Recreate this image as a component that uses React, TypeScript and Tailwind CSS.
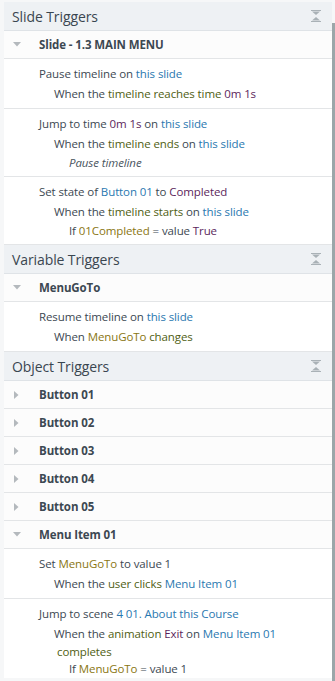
import React from 'react';

const C = {
  gray: 'text-[#3c4852]',
  blue: 'text-[#2a78b0]',
  olive: 'text-[#4f5e12]',
  gold: 'text-[#8a7612]',
  purple: 'text-[#5c1f5c]',
};

type Seg = [string, string];

function Line({ segs, indent = 0, italic = false, h = 'h-[20px] leading-[20px]' }: { segs: Seg[]; indent?: number; italic?: boolean; h?: string }) {
  const pad = indent === 0 ? 'pl-[35px]' : indent === 1 ? 'pl-[50px]' : 'pl-[65px]';
  return (
    <div className={`${pad} ${italic ? 'italic' : ''} ${h} whitespace-nowrap`}>
      {segs.map(([cls, t], i) => (
        <span key={i} className={cls}>{t}</span>
      ))}
    </div>
  );
}

function Collapse() {
  return (
    <svg width="10" height="12" viewBox="0 0 10 12" className="mr-[11px]">
      <rect x="0" y="0" width="10" height="1" fill="#a9b1b6" />
      <path d="M1 1.5 L9 1.5 L5 5 Z" fill="#a9b1b6" />
      <path d="M1 10.5 L9 10.5 L5 7 Z" fill="#a9b1b6" />
      <rect x="0" y="11" width="10" height="1" fill="#a9b1b6" />
    </svg>
  );
}

function Section({ title }: { title: string }) {
  return (
    <div className="h-[29px] flex items-center justify-between bg-[#eef1f4] border-b border-[#dfe3e7] pl-[8px]">
      <span className="text-[14px] tracking-[-0.1px] text-[#3a4650]">{title}</span>
      <Collapse />
    </div>
  );
}

function Group({ title, open }: { title: string; open: boolean }) {
  return (
    <div className="h-[28px] flex items-center bg-[#fcfcfc] border-b border-[#e3e5e7]">
      <div className="w-[35px] flex pl-[9px]">
        {open ? (
          <svg width="8" height="5" viewBox="0 0 8 5"><path d="M0 0 L8 0 L4 4.5 Z" fill="#b4b9bd" /></svg>
        ) : (
          <svg width="5" height="8" viewBox="0 0 5 8" className="ml-[1px]"><path d="M0 0 L4.5 4 L0 8 Z" fill="#b4b9bd" /></svg>
        )}
      </div>
      <span className="text-[11.5px] font-bold text-[#3c4852]">{title}</span>
    </div>
  );
}

function Item({ children }: { children: React.ReactNode }) {
  return <div className="pt-[5px] pb-[4px] bg-white border-b border-[#e3e5e7]">{children}</div>;
}

const sub = 'h-[18px] leading-[18px]';

export default function App() {
  return (
    <div className="w-[335px] h-[681px] overflow-hidden bg-[#f6f7f8] flex text-[11.5px] tracking-[-0.1px]" style={{ fontFamily: '"Open Sans", "Noto Sans", sans-serif' }}>
      <div className="flex-1 pl-[4px] pt-[2px]">
        <Section title="Slide Triggers" />
        <Group title="Slide - 1.3 MAIN MENU" open />
        <Item>
          <Line segs={[[C.gray, 'Pause timeline on '], [C.blue, 'this slide']]} />
          <Line indent={1} segs={[[C.gray, 'When the '], [C.olive, 'timeline reaches time '], [C.purple, '0m 1s']]} />
        </Item>
        <Item>
          <Line segs={[[C.gray, 'Jump to time '], [C.purple, '0m 1s'], [C.gray, ' on '], [C.blue, 'this slide']]} />
          <Line indent={1} segs={[[C.gray, 'When the '], [C.olive, 'timeline ends'], [C.gray, ' on '], [C.blue, 'this slide']]} />
          <Line indent={2} italic h={sub} segs={[['text-[#4a5560]', 'Pause timeline']]} />
        </Item>
        <Item>
          <Line segs={[[C.gray, 'Set state of '], [C.blue, 'Button 01'], [C.gray, ' to '], [C.purple, 'Completed']]} />
          <Line indent={1} segs={[[C.gray, 'When the '], [C.olive, 'timeline starts'], [C.gray, ' on '], [C.blue, 'this slide']]} />
          <Line indent={2} h={sub} segs={[[C.gray, 'If '], [C.gold, '01Completed'], [C.gray, ' = value '], [C.purple, 'True']]} />
        </Item>
        <Section title="Variable Triggers" />
        <Group title="MenuGoTo" open />
        <Item>
          <Line segs={[[C.gray, 'Resume timeline on '], [C.blue, 'this slide']]} />
          <Line indent={1} segs={[[C.gray, 'When '], [C.gold, 'MenuGoTo'], [C.olive, ' changes']]} />
        </Item>
        <Section title="Object Triggers" />
        <Group title="Button 01" open={false} />
        <Group title="Button 02" open={false} />
        <Group title="Button 03" open={false} />
        <Group title="Button 04" open={false} />
        <Group title="Button 05" open={false} />
        <Group title="Menu Item 01" open />
        <Item>
          <Line segs={[[C.gray, 'Set '], [C.gold, 'MenuGoTo'], [C.gray, ' to value 1']]} />
          <Line indent={1} segs={[[C.gray, 'When the '], [C.olive, 'user clicks '], [C.blue, 'Menu Item 01']]} />
        </Item>
        <div className="pt-[5px] bg-white">
          <Line segs={[[C.gray, 'Jump to scene '], [C.blue, '4 01. About this Course']]} />
          <Line indent={1} segs={[[C.gray, 'When the '], [C.olive, 'animation '], [C.purple, 'Exit'], [C.gray, ' on '], [C.blue, 'Menu Item 01']]} />
          <div className="pl-[53px] h-[16px] leading-[16px]"><span className={C.olive}>completes</span></div>
          <Line indent={2} h={sub} segs={[[C.gray, 'If '], [C.gold, 'MenuGoTo'], [C.gray, ' = value 1']]} />
        </div>
      </div>
      <div className="w-[3px] flex flex-col">
        <div className="h-[23px] bg-[#f6f7f8]" />
        <div className="flex-1 bg-[#9ba6a9]" />
      </div>
    </div>
  );
}
